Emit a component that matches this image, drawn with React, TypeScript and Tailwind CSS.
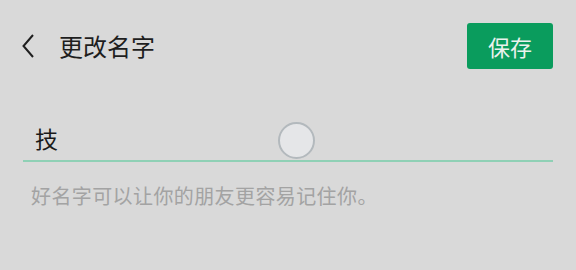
import React from "react";

export default function App() {
  const font = { fontFamily: '"Noto Sans CJK SC", "Noto Sans", sans-serif' };
  return (
    <div className="w-[576px] h-[270px] bg-[#d9d9d9] overflow-hidden" style={font}>
      <div className="flex items-center justify-between pt-[23px] pl-[22px] pr-[23px] h-[69px]">
        <div className="flex items-center">
          <svg width="12" height="24" viewBox="0 0 12 24" className="block">
            <path d="M11 1 L1.5 12 L11 23" fill="none" stroke="#1f1f1f" strokeWidth="2" />
          </svg>
          <span className="ml-[25px] text-[24px] leading-[30px] text-[#1e1e1e]">更改名字</span>
        </div>
        <button className="w-[86px] h-[46px] rounded-[3px] bg-[#0a9c5d] text-[#e9f2ed] text-[22px] leading-none flex items-center justify-center">
          保存
        </button>
      </div>
      <div className="px-[23px] mt-[51px]">
        <div className="relative h-[40px] flex items-center pl-[12px]">
          <span className="text-[23px] leading-[30px] text-[#1a1a1a] -mt-[5px]">技</span>
          <div className="absolute left-[255px] top-[2px] w-[37px] h-[37px] rounded-full bg-[#e5e6e8] border-2 border-[#b3b9bd]" />
        </div>
        <div className="h-[2px] bg-[#8fd0b5]" />
        <div className="mt-[21px] pl-[8px] text-[20px] leading-[26px] tracking-[0.4px] text-[#a3a3a3]">
          好名字可以让你的朋友更容易记住你。
        </div>
      </div>
    </div>
  );
}
